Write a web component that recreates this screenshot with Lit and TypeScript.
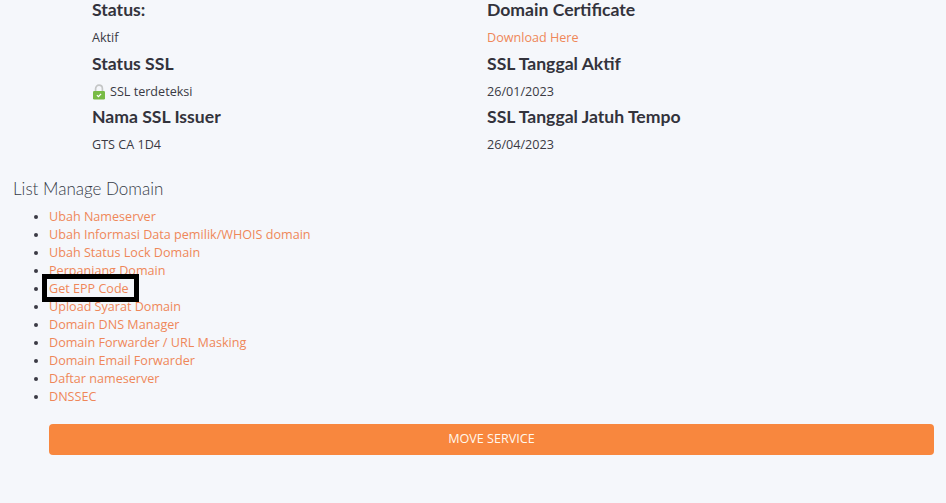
import { LitElement, html, css } from "lit";
import { customElement } from "lit/decorators.js";

const links = [
  "Ubah Nameserver",
  "Ubah Informasi Data pemilik/WHOIS domain",
  "Ubah Status Lock Domain",
  "Perpanjang Domain",
  "Get EPP Code",
  "Upload Syarat Domain",
  "Domain DNS Manager",
  "Domain Forwarder / URL Masking",
  "Domain Email Forwarder",
  "Daftar nameserver",
  "DNSSEC",
];

@customElement("app-root")
export class AppRoot extends LitElement {
  static styles = css`
    :host {
      display: block;
      height: 503px;
      overflow: hidden;
      background: #f5f7fb;
      color: #3a3a44;
      font-family: "Open Sans", sans-serif;
      font-size: 12.6px;
      line-height: 18px;
    }
    .info {
      display: grid;
      grid-template-columns: 395px 395px;
      padding-left: 92px;
    }
    .field {
      height: 53.5px;
      display: flex;
      flex-direction: column;
    }
    .label {
      height: 20px;
      font-family: "Lato", sans-serif;
      font-weight: 700;
      font-size: 17.6px;
      line-height: 20px;
      color: #33333c;
    }
    .value {
      margin-top: 9px;
      display: flex;
      align-items: center;
      gap: 4px;
    }
    .lock {
      flex: none;
      margin-top: 1px;
    }
    a {
      color: #ef8759;
      text-decoration: none;
    }
    .title {
      margin: 16px 0 0 13px;
      font-family: "Lato", sans-serif;
      font-weight: 300;
      font-size: 17px;
      line-height: 24px;
      color: #363b47;
    }
    ul {
      position: relative;
      margin: 7px 0 0;
      padding: 0 0 0 49px;
      list-style: disc;
    }
    li {
      height: 18px;
      line-height: 18px;
    }
    .mark {
      position: absolute;
      left: 42px;
      top: 66px;
      width: 97px;
      height: 28px;
      box-sizing: border-box;
      border: 5px solid #000;
    }
    .btn {
      display: block;
      box-sizing: border-box;
      margin: 18px 12px 0 49px;
      width: 885px;
      height: 31px;
      border: 0;
      border-radius: 4px;
      background: #f8873e;
      color: #fff8ee;
      font-family: "Open Sans", sans-serif;
      font-size: 12.6px;
      line-height: 29px;
      padding: 0 0 2px;
      text-align: center;
    }
  `;

  private lock() {
    return html`<svg class="lock" width="14" height="16" viewBox="0 0 14 16">
      <path d="M3.6 8V4.8C3.6 2.8 5 1.2 7 1.2s3.4 1.6 3.4 3.6V8" fill="none" stroke="#c4c6c6" stroke-width="1.7"/>
      <rect x="1" y="7" width="12" height="8.5" rx="1.2" fill="#78bb45"/>
      <path d="M4.9 11.2l1.5 1.5 2.7-2.9" fill="none" stroke="#fff" stroke-width="1.2"/>
    </svg>`;
  }

  render() {
    return html`
      <div class="info">
        <div class="field"><div class="label">Status:</div><div class="value">Aktif</div></div>
        <div class="field"><div class="label">Domain Certificate</div><div class="value"><a href="#">Download Here</a></div></div>
        <div class="field"><div class="label">Status SSL</div><div class="value">${this.lock()}SSL terdeteksi</div></div>
        <div class="field"><div class="label">SSL Tanggal Aktif</div><div class="value">26/01/2023</div></div>
        <div class="field"><div class="label">Nama SSL Issuer</div><div class="value">GTS CA 1D4</div></div>
        <div class="field"><div class="label">SSL Tanggal Jatuh Tempo</div><div class="value">26/04/2023</div></div>
      </div>
      <div class="title">List Manage Domain</div>
      <ul>
        ${links.map((l) => html`<li><a href="#">${l}</a></li>`)}
        <div class="mark"></div>
      </ul>
      <button class="btn">MOVE SERVICE</button>
    `;
  }
}
